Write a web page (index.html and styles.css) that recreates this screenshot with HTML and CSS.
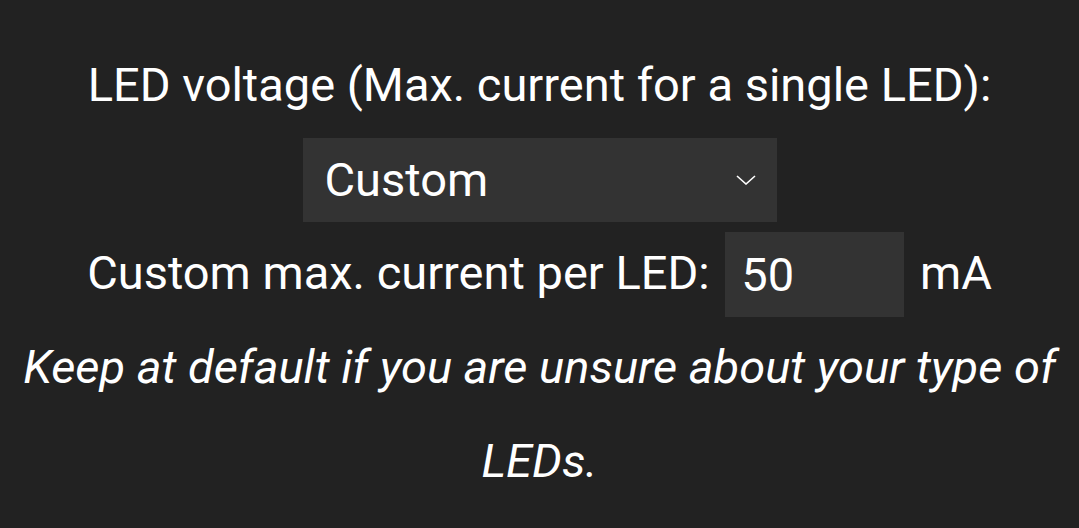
FILE: index.html
```
<!DOCTYPE html>
<html lang="en">
<head>
  <meta charset="UTF-8">
  <title>LED Preferences</title>
  <meta name="viewport" content="width=device-width, initial-scale=1.0"/>
  <link rel="stylesheet" href="styles.css">
</head>
<body>
  LED voltage (Max. current for a single LED):<br>
  <span class="select-wrap">
    <select name="LAsel">
      <option value="55">5V default (55mA)</option>
      <option value="35">5V ws2815 (35mA)</option>
      <option value="30">12V (30mA)</option>
      <option value="255">WS2815 (12mA)</option>
      <option value="0" selected>Custom</option>
    </select>
    <svg class="chevron" width="20" height="10" viewBox="0 0 20 10"><path d="M1 1 L10 9 L19 1" fill="none" stroke="#fff" stroke-width="1.6"/></svg>
  </span><br>
  <span id="LAdis">Custom max. current per LED: <input name="LA" type="number" min="0" max="255" value="50"> mA<br></span>
  <i>Keep at default if you are unsure about your type of LEDs.</i><br>
</body>
</html>
```
FILE: styles.css
```
body { font-family: Roboto, "Noto Sans", sans-serif; font-size: 47px; line-height: 94px; text-align: center; background: #222; color: #fff; margin: 0; padding: 38px 20px 0; }
.select-wrap { position: relative; display: inline-block; }
select { -webkit-appearance: none; appearance: none; width: 474px; height: 84px; background: #333; color: #fff; border: 0; border-radius: 0; padding: 0 60px 0 22px; font-family: inherit; font-size: 47px; vertical-align: baseline; position: relative; top: 1px; }
.chevron { position: absolute; right: 21px; top: 50%; margin-top: -4px; pointer-events: none; }
input[type="number"] { -moz-appearance: textfield; width: 179px; height: 85px; box-sizing: border-box; background: #333; color: #fff; border: 0; border-radius: 0; padding: 0 16px; margin: 0 4px; font-family: inherit; font-size: 47px; position: relative; top: 2px; }
input::-webkit-outer-spin-button, input::-webkit-inner-spin-button { -webkit-appearance: none; margin: 0; }
i { display: inline-block; }
```
